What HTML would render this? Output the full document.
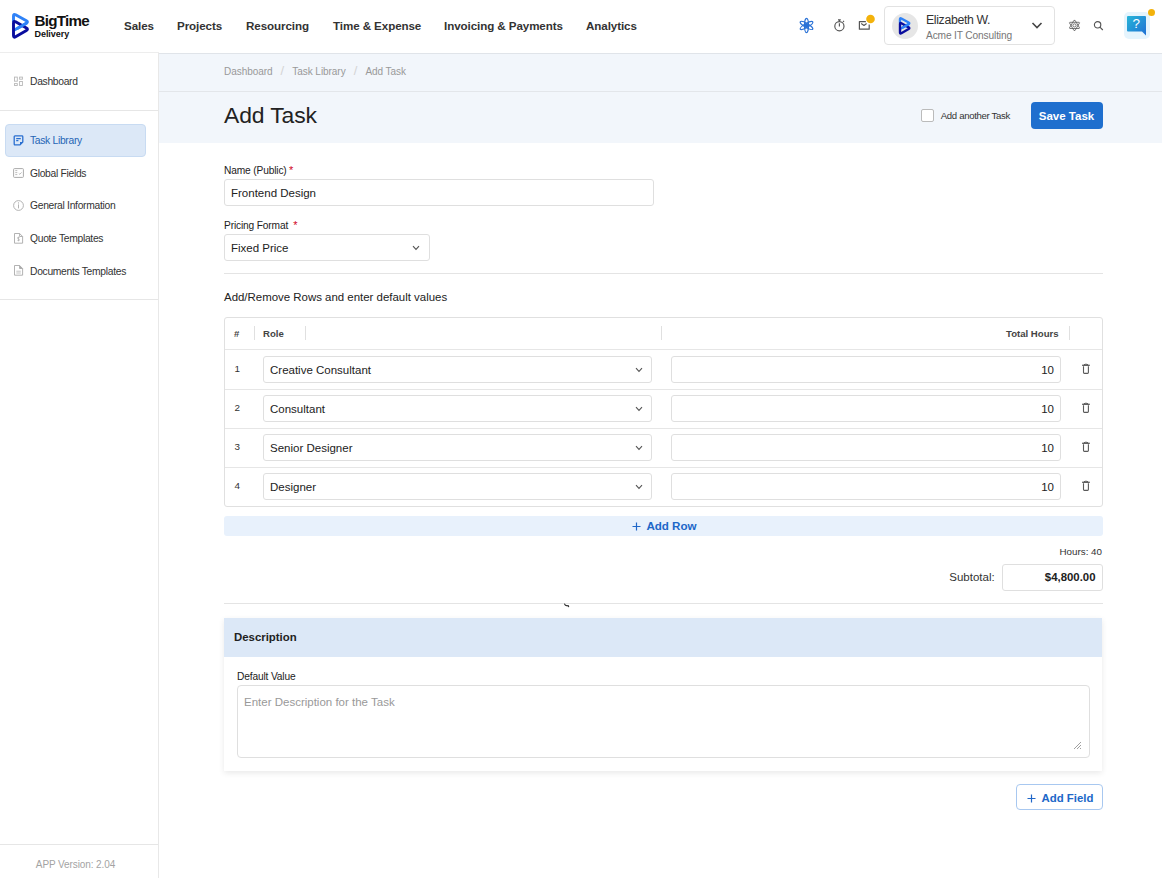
<!DOCTYPE html>
<html><head><meta charset="utf-8">
<style>
*{box-sizing:border-box;margin:0;padding:0}
html,body{width:1162px;height:878px;overflow:hidden;background:#fff;font-family:"Liberation Sans",sans-serif;color:#222}
.a{position:absolute;white-space:nowrap}
#hdr{position:absolute;left:0;top:0;width:1162px;height:53px;background:#fff}
.nav{position:absolute;top:19px;font-size:11.6px;font-weight:bold;color:#333;line-height:14px;letter-spacing:-0.08px}
#side{position:absolute;left:0;top:53px;width:159px;height:825px;background:#fff;border-right:1px solid #e8e8e8}
.si{position:absolute;left:30px;font-size:10.3px;color:#333;line-height:12px;white-space:nowrap;letter-spacing:-0.3px}
.hr{position:absolute;height:1px;background:#e6e6e6}
#band{position:absolute;left:159px;top:53px;width:1003px;height:90.4px;background:#f2f6fb}
.lbl{position:absolute;font-size:10.2px;color:#222;line-height:12px;white-space:nowrap;letter-spacing:-0.15px}
.inp{position:absolute;border:1px solid #dfdfdf;border-radius:3px;background:#fff}
.txt{position:absolute;font-size:11.5px;color:#222;line-height:14px;white-space:nowrap}
.chev{position:absolute}
</style></head><body>
<div id="hdr"></div>
<!-- logo -->
<svg class="a" style="left:10px;top:11px" width="22" height="30" viewBox="10 11 22 30">
  <path d="M13.50 21.00 L13.50 16.00 Q13.50 13.60 15.59 14.77 L26.41 20.83 Q28.50 22.00 26.41 23.19 L14.80 29.80" fill="none" stroke="#2f82f7" stroke-width="2.9" stroke-linejoin="round" stroke-linecap="round"/>
  <path d="M15.58 21.79 L26.42 28.01 Q28.50 29.20 26.43 30.41 L15.57 36.79 Q13.50 38.00 13.50 35.60 L13.50 23.00 Q13.50 20.60 15.58 21.79 Z" fill="none" stroke="#0a0d9e" stroke-width="2.9" stroke-linejoin="round"/>
  <path d="M26.4 23.2 L17.8 28.2" fill="none" stroke="#2f82f7" stroke-width="2.9" stroke-linecap="round"/>
</svg>
<div class="a" style="left:34.5px;top:13px;font-size:15.2px;font-weight:bold;color:#111;letter-spacing:-0.75px;line-height:16px">BigTime</div>
<div class="a" style="left:34.5px;top:29px;font-size:9px;font-weight:bold;color:#111;line-height:10px;letter-spacing:-0.05px">Delivery</div>
<div class="nav" style="left:124px">Sales</div>
<div class="nav" style="left:177px">Projects</div>
<div class="nav" style="left:246px">Resourcing</div>
<div class="nav" style="left:333px">Time &amp; Expense</div>
<div class="nav" style="left:444px">Invoicing &amp; Payments</div>
<div class="nav" style="left:586px">Analytics</div>

<!-- header right -->
<svg class="a" style="left:798px;top:17px" width="17" height="17" viewBox="0 0 17 17">
  <g fill="none" stroke="#2a72d6" stroke-width="1.2">
    <ellipse cx="8.5" cy="8.5" rx="2" ry="7.2"/>
    <ellipse cx="8.5" cy="8.5" rx="2" ry="7.2" transform="rotate(60 8.5 8.5)"/>
    <ellipse cx="8.5" cy="8.5" rx="2" ry="7.2" transform="rotate(-60 8.5 8.5)"/>
  </g>
  <circle cx="8.5" cy="8.5" r="2" fill="#2a72d6"/>
</svg>
<svg class="a" style="left:832px;top:18px" width="14" height="15" viewBox="0 0 14 15">
  <g fill="none" stroke="#555" stroke-width="1.15">
    <circle cx="7.4" cy="8.2" r="4.6"/>
    <path d="M7.4 5.2 V8.4 M6 1.8 H8.8 M7.4 1.8 V3.6 M11 3.8 L12 2.8"/>
  </g>
</svg>
<svg class="a" style="left:855px;top:12px" width="22" height="20" viewBox="855 12 22 20">
  <g fill="none" stroke="#555" stroke-width="1.2" stroke-linejoin="round">
    <path d="M866 21.6 H859.4 V29.2 H869.2 V24.6"/>
    <path d="M861.2 23.6 L864 25.4 L866.6 23.6"/>
  </g>
  <circle cx="870.5" cy="19" r="5.3" fill="#fff"/>
  <circle cx="870.5" cy="19" r="4.3" fill="#f3b20b"/>
</svg>
<div class="a" style="left:884px;top:6px;width:171px;height:39px;border:1px solid #e2e2e2;border-radius:4px;background:#fff"></div>
<div class="a" style="left:892px;top:13px;width:26px;height:26px;border-radius:50%;background:#e6e6e6"></div>
<svg class="a" style="left:897px;top:16px" width="16" height="20" viewBox="10 11 22 30">
  <path d="M13.50 21.00 L13.50 16.00 Q13.50 13.60 15.59 14.77 L26.41 20.83 Q28.50 22.00 26.41 23.19 L14.80 29.80" fill="none" stroke="#2f82f7" stroke-width="3.6" stroke-linejoin="round" stroke-linecap="round"/>
  <path d="M15.58 21.79 L26.42 28.01 Q28.50 29.20 26.43 30.41 L15.57 36.79 Q13.50 38.00 13.50 35.60 L13.50 23.00 Q13.50 20.60 15.58 21.79 Z" fill="none" stroke="#0a0d9e" stroke-width="3.6" stroke-linejoin="round"/>
  <path d="M26.4 23.2 L17.8 28.2" fill="none" stroke="#2f82f7" stroke-width="3.6" stroke-linecap="round"/>
</svg>
<div class="a" style="left:926px;top:13px;font-size:12.3px;color:#333;line-height:14px;letter-spacing:-0.35px">Elizabeth W.</div>
<div class="a" style="left:926px;top:30px;font-size:10.2px;color:#777;line-height:12px;letter-spacing:-0.15px">Acme IT Consulting</div>
<svg class="a" style="left:1031px;top:21px" width="12" height="9" viewBox="0 0 12 9">
  <path d="M1.5 2 L6 6.5 L10.5 2" fill="none" stroke="#444" stroke-width="1.6"/>
</svg>
<svg class="a" style="left:1066px;top:17px" width="17" height="17" viewBox="1066 17 17 17"><g fill="none" stroke="#555" stroke-width="0.8" stroke-linejoin="round"><path d="M1073.9 20.4 H1075.1 L1079.6 28.0 L1079.2 28.5 H1069.8 L1069.4 28.0 Z"/><path d="M1073.9 30.4 H1075.1 L1079.6 22.8 L1079.2 22.3 H1069.8 L1069.4 22.8 Z"/><circle cx="1074.5" cy="25.4" r="1.6"/></g></svg>
<svg class="a" style="left:1093px;top:19.5px" width="12" height="12" viewBox="0 0 12 12">
  <g fill="none" stroke="#555" stroke-width="1.15">
    <circle cx="4.6" cy="4.8" r="3.2"/>
    <path d="M6.9 7.1 L9.8 10"/>
  </g>
</svg>
<div class="a" style="left:1123.5px;top:12px;width:26px;height:26.5px;border-radius:5px;background:#e5f4fd"></div>
<svg class="a" style="left:1126px;top:15px" width="21" height="22" viewBox="0 0 21 22">
  <defs><linearGradient id="hg" x1="0" y1="0" x2="1" y2="1"><stop offset="0" stop-color="#27b5d8"/><stop offset="1" stop-color="#1f6fd4"/></linearGradient></defs>
  <path d="M1 2 Q1 1 2 1 H19 Q20 1 20 2 V20.5 L16 16.5 H2 Q1 16.5 1 15.5 Z" fill="url(#hg)"/>
  <text x="10.3" y="12.9" font-family="Liberation Sans" font-size="13.5" fill="#fff" text-anchor="middle">?</text>
</svg>
<div class="a" style="left:1147.7px;top:8.7px;width:7.2px;height:7.2px;border-radius:50%;background:#f3b20b"></div>

<!-- sidebar -->
<div id="side"></div>
<div class="si" style="top:76px">Dashboard</div>
<div class="hr" style="left:0;top:110px;width:158px"></div>
<div class="a" style="left:5px;top:124px;width:141px;height:33px;background:#dce8f7;border:1px solid #c8dbf2;border-radius:4px"></div>
<div class="si" style="top:135px;color:#2565b5">Task Library</div>
<div class="si" style="top:167.5px">Global Fields</div>
<div class="si" style="top:200px">General Information</div>
<div class="si" style="top:233px">Quote Templates</div>
<div class="si" style="top:265.5px">Documents Templates</div>
<div class="hr" style="left:0;top:299px;width:158px"></div>
<div class="hr" style="left:0;top:844px;width:158px"></div>
<div class="a" style="left:0.5px;top:859px;width:150px;text-align:center;font-size:10px;color:#a3a3a3;letter-spacing:-0.1px">APP Version: 2.04</div>

<svg class="a" style="left:13px;top:76px" width="11" height="11" viewBox="13 76 11 11"><g fill="none" stroke="#b8b8b8" stroke-width="0.9"><rect x="14.5" y="77.1" width="2.8" height="4.1"/><rect x="19.6" y="77.1" width="2.8" height="2.1"/><rect x="14.5" y="83.6" width="2.8" height="1.9"/><rect x="19.6" y="81.5" width="2.8" height="4.0"/></g></svg>
<svg class="a" style="left:13px;top:134.5px" width="11" height="11" viewBox="0 0 11 11"><g fill="none" stroke="#2a6fd0" stroke-width="1.3" stroke-linejoin="round"><path d="M1.2 1.7 Q1.2 0.9 2 0.9 H9 Q9.8 0.9 9.8 1.7 V7 L7 9.9 H2 Q1.2 9.9 1.2 9.1 Z"/><path d="M3.2 3.6 H7.8 M3.2 5.6 H5.4"/></g><path d="M9.8 7 L7 7 L7 9.9 Z" fill="#2a6fd0"/></svg>
<svg class="a" style="left:13px;top:168px" width="11" height="10" viewBox="0 0 11 10"><g fill="none" stroke="#aaa" stroke-width="1"><rect x="0.6" y="0.6" width="9.8" height="8.8" rx="0.8"/><path d="M2.3 2.6 H4.3 M2.3 4.6 H4.3 M2.3 6.6 H4.3 M5.8 5.4 L6.8 6.3 L8.6 4.4" stroke-width="0.8"/></g></svg>
<svg class="a" style="left:13px;top:200px" width="11" height="11" viewBox="0 0 11 11"><g fill="none" stroke="#aaa" stroke-width="0.9"><circle cx="5.5" cy="5.5" r="4.9"/><path d="M5.5 4.4 V8.4"/></g><circle cx="5.5" cy="2.9" r="0.6" fill="#aaa"/></svg>
<svg class="a" style="left:14px;top:232.5px" width="10" height="11" viewBox="0 0 10 11"><g fill="none" stroke="#aaa" stroke-width="0.9"><path d="M0.5 0.5 H5.6 L8.6 3.5 V10.2 H0.5 Z M5.6 0.5 V3.5 H8.6"/><path d="M5.6 4.6 Q4.6 4 3.6 4.6 Q3.2 5.6 4.6 6 Q5.8 6.4 5.3 7.4 Q4.4 7.9 3.4 7.3 M4.5 3.8 V8.2" stroke-width="0.7"/></g></svg>
<svg class="a" style="left:14px;top:265px" width="10" height="11" viewBox="0 0 10 11"><g fill="none" stroke="#aaa" stroke-width="0.9"><path d="M0.5 0.5 H5.6 L8.6 3.5 V10.2 H0.5 Z"/><path d="M5.6 0.5 V3.5 H8.6" /><path d="M2.3 6.2 H6.8 M2.3 8 H6.8" stroke-width="0.7"/></g><path d="M5.6 0.5 L8.6 3.5 H5.6 Z" fill="#aaa"/></svg>

<!-- band -->
<div id="band"></div>
<div class="hr" style="left:0;top:52px;width:159px;background:#ededed"></div>
<div class="hr" style="left:159px;top:53px;width:1003px;background:#e0e4e9"></div>
<div class="hr" style="left:159px;top:91px;width:1003px;background:#e3e6ea"></div>
<div class="a" style="left:224px;top:65px;font-size:10px;color:#999;line-height:12px;letter-spacing:-0.05px">Dashboard<span style="display:inline-block;width:19.8px;text-align:center;color:#d4d4d4;font-size:13px;line-height:12px">/</span>Task Library<span style="display:inline-block;width:19.8px;text-align:center;color:#d4d4d4;font-size:13px;line-height:12px">/</span>Add Task</div>
<div class="a" style="left:224px;top:102px;font-size:22.9px;color:#222;line-height:26px;letter-spacing:-0.1px">Add Task</div>

<!-- title bar right -->
<div class="a" style="left:920.5px;top:108.5px;width:13.5px;height:13.5px;border:1px solid #bbb;border-radius:2px;background:#fff"></div>
<div class="a" style="left:940.7px;top:109.5px;font-size:9.6px;color:#333;line-height:11px;letter-spacing:-0.32px">Add another Task</div>
<div class="a" style="left:1030.5px;top:102px;width:72px;height:26.5px;border-radius:4px;background:#1f6fce;color:#fff;font-size:11.5px;font-weight:bold;line-height:28px;text-align:center">Save Task</div>

<!-- form -->
<div class="lbl" style="left:224px;top:164px">Name (Public)<span style="color:#d0021b;margin-left:2.5px;font-size:11px">*</span></div>
<div class="inp" style="left:224px;top:179px;width:430px;height:27px"></div>
<div class="txt" style="left:231px;top:186px">Frontend Design</div>
<div class="lbl" style="left:224px;top:219px">Pricing Format<span style="color:#d0021b;margin-left:5px;font-size:11px">*</span></div>
<div class="inp" style="left:224px;top:234px;width:206px;height:27px"></div>
<div class="txt" style="left:231px;top:241px">Fixed Price</div>
<svg class="chev" style="left:412px;top:245px" width="8" height="6" viewBox="0 0 8 6"><path d="M1 1.2 L4 4.4 L7 1.2" fill="none" stroke="#555" stroke-width="1.15"/></svg>
<div class="hr" style="left:224px;top:273px;width:879px;background:#e4e4e4"></div>

<div class="a" style="left:224px;top:291px;font-size:11.45px;color:#222;line-height:13px;letter-spacing:0px">Add/Remove Rows and enter default values</div>

<!-- table -->
<div class="a" style="left:224px;top:317px;width:879px;height:190px;border:1px solid #e0e0e0;border-radius:3px;background:#fff"></div>
<div class="a" style="left:234px;top:328px;font-size:9.6px;font-weight:bold;color:#444;line-height:11px">#</div>
<div class="a" style="left:263px;top:328px;font-size:9.6px;font-weight:bold;color:#444;line-height:11px">Role</div>
<div class="a" style="left:1006px;top:328px;font-size:9.6px;font-weight:bold;color:#444;line-height:11px">Total Hours</div>
<div class="a" style="left:254px;top:326px;width:1px;height:14px;background:#e0e0e0"></div>
<div class="a" style="left:305px;top:326px;width:1px;height:14px;background:#e0e0e0"></div>
<div class="a" style="left:661px;top:326px;width:1px;height:14px;background:#e0e0e0"></div>
<div class="a" style="left:1069px;top:326px;width:1px;height:14px;background:#e0e0e0"></div>
<div class="hr" style="left:225px;top:349px;width:877px;background:#e6e6e6"></div>
<div class="a" style="left:234.5px;top:362.7px;font-size:9.9px;color:#333;line-height:11px">1</div>
<div class="inp" style="left:263px;top:356px;width:389px;height:27px"></div>
<div class="txt" style="left:270px;top:362.5px">Creative Consultant</div>
<svg class="chev" style="left:635px;top:367px" width="8" height="6" viewBox="0 0 8 6"><path d="M1 1.2 L4 4.4 L7 1.2" fill="none" stroke="#555" stroke-width="1.1"/></svg>
<div class="inp" style="left:671px;top:356px;width:390px;height:27px"></div>
<div class="txt" style="left:1000px;top:362.5px;width:54px;text-align:right">10</div>
<svg class="a" style="left:1081px;top:363px" width="10" height="12" viewBox="0 0 10 12"><g fill="none" stroke="#5a5a5a" stroke-linejoin="round"><path d="M1.1 2.3 H8.8" stroke-width="1.3"/><path d="M2.9 1.7 Q4.95 0.6 7 1.7" stroke-width="1"/><path d="M2.5 3.2 V9.6 Q2.5 10.4 3.3 10.4 H6.6 Q7.4 10.4 7.4 9.6 V3.2" stroke-width="1.1"/></g></svg>
<div class="hr" style="left:225px;top:389px;width:877px;background:#e6e6e6"></div>
<div class="a" style="left:234.5px;top:401.7px;font-size:9.9px;color:#333;line-height:11px">2</div>
<div class="inp" style="left:263px;top:395px;width:389px;height:27px"></div>
<div class="txt" style="left:270px;top:401.5px">Consultant</div>
<svg class="chev" style="left:635px;top:406px" width="8" height="6" viewBox="0 0 8 6"><path d="M1 1.2 L4 4.4 L7 1.2" fill="none" stroke="#555" stroke-width="1.1"/></svg>
<div class="inp" style="left:671px;top:395px;width:390px;height:27px"></div>
<div class="txt" style="left:1000px;top:401.5px;width:54px;text-align:right">10</div>
<svg class="a" style="left:1081px;top:402px" width="10" height="12" viewBox="0 0 10 12"><g fill="none" stroke="#5a5a5a" stroke-linejoin="round"><path d="M1.1 2.3 H8.8" stroke-width="1.3"/><path d="M2.9 1.7 Q4.95 0.6 7 1.7" stroke-width="1"/><path d="M2.5 3.2 V9.6 Q2.5 10.4 3.3 10.4 H6.6 Q7.4 10.4 7.4 9.6 V3.2" stroke-width="1.1"/></g></svg>
<div class="hr" style="left:225px;top:428px;width:877px;background:#e6e6e6"></div>
<div class="a" style="left:234.5px;top:440.7px;font-size:9.9px;color:#333;line-height:11px">3</div>
<div class="inp" style="left:263px;top:434px;width:389px;height:27px"></div>
<div class="txt" style="left:270px;top:440.5px">Senior Designer</div>
<svg class="chev" style="left:635px;top:445px" width="8" height="6" viewBox="0 0 8 6"><path d="M1 1.2 L4 4.4 L7 1.2" fill="none" stroke="#555" stroke-width="1.1"/></svg>
<div class="inp" style="left:671px;top:434px;width:390px;height:27px"></div>
<div class="txt" style="left:1000px;top:440.5px;width:54px;text-align:right">10</div>
<svg class="a" style="left:1081px;top:441px" width="10" height="12" viewBox="0 0 10 12"><g fill="none" stroke="#5a5a5a" stroke-linejoin="round"><path d="M1.1 2.3 H8.8" stroke-width="1.3"/><path d="M2.9 1.7 Q4.95 0.6 7 1.7" stroke-width="1"/><path d="M2.5 3.2 V9.6 Q2.5 10.4 3.3 10.4 H6.6 Q7.4 10.4 7.4 9.6 V3.2" stroke-width="1.1"/></g></svg>
<div class="hr" style="left:225px;top:467px;width:877px;background:#e6e6e6"></div>
<div class="a" style="left:234.5px;top:479.7px;font-size:9.9px;color:#333;line-height:11px">4</div>
<div class="inp" style="left:263px;top:473px;width:389px;height:27px"></div>
<div class="txt" style="left:270px;top:479.5px">Designer</div>
<svg class="chev" style="left:635px;top:484px" width="8" height="6" viewBox="0 0 8 6"><path d="M1 1.2 L4 4.4 L7 1.2" fill="none" stroke="#555" stroke-width="1.1"/></svg>
<div class="inp" style="left:671px;top:473px;width:390px;height:27px"></div>
<div class="txt" style="left:1000px;top:479.5px;width:54px;text-align:right">10</div>
<svg class="a" style="left:1081px;top:480px" width="10" height="12" viewBox="0 0 10 12"><g fill="none" stroke="#5a5a5a" stroke-linejoin="round"><path d="M1.1 2.3 H8.8" stroke-width="1.3"/><path d="M2.9 1.7 Q4.95 0.6 7 1.7" stroke-width="1"/><path d="M2.5 3.2 V9.6 Q2.5 10.4 3.3 10.4 H6.6 Q7.4 10.4 7.4 9.6 V3.2" stroke-width="1.1"/></g></svg>

<div class="a" style="left:224px;top:516px;width:879px;height:20px;border-radius:3px;background:#e8f1fc"></div>
<svg class="a" style="left:632px;top:521.5px" width="9" height="9" viewBox="0 0 9 9"><path d="M4.5 0.5 V8.5 M0.5 4.5 H8.5" stroke="#2067c8" stroke-width="1.2"/></svg>
<div class="a" style="left:646.5px;top:518.5px;font-size:11.6px;font-weight:bold;color:#2067c8;line-height:14px;letter-spacing:-0.05px">Add Row</div>
<div class="a" style="left:1002px;top:546px;width:100px;text-align:right;font-size:9.8px;color:#333;line-height:11px">Hours: 40</div>
<div class="a" style="left:894.7px;top:570px;width:100px;text-align:right;font-size:11.5px;color:#333;line-height:14px">Subtotal:</div>
<div class="inp" style="left:1002px;top:564px;width:101px;height:27px"></div>
<div class="a" style="left:1002px;top:570px;width:93.5px;text-align:right;font-size:11.4px;font-weight:bold;color:#222;line-height:14px">$4,800.00</div>
<div class="hr" style="left:224px;top:602.6px;width:879px;background:#e4e4e4"></div>
<svg class="a" style="left:562px;top:601px" width="10" height="8" viewBox="562 601 10 8"><path d="M564.6 604.1 Q565.2 605.6 566.6 605.6 L568.4 605.8 L568.6 606.6" fill="none" stroke="#333" stroke-width="1.2" stroke-linecap="round"/></svg>

<!-- description card -->
<div class="a" style="left:224px;top:618px;width:878px;height:153px;background:#fff;box-shadow:0 2px 6px rgba(0,0,0,0.09)"></div>
<div class="a" style="left:224px;top:618px;width:878px;height:39px;background:#dce8f7"></div>
<div class="a" style="left:234px;top:630px;font-size:11.4px;font-weight:bold;color:#222;line-height:14px">Description</div>
<div class="lbl" style="left:237px;top:671px">Default Value</div>
<div class="inp" style="left:237px;top:685px;width:853px;height:73px;border-radius:4px"></div>
<div class="a" style="left:244px;top:695px;font-size:11.5px;color:#999;line-height:14px">Enter Description for the Task</div>
<svg class="a" style="left:1072px;top:740px" width="10" height="10" viewBox="0 0 10 10"><path d="M2 9 L9 2 M5 9 L9 5 M8 9 L9 8" stroke="#888" stroke-width="0.8"/></svg>

<div class="a" style="left:1016px;top:784px;width:87px;height:26px;border:1px solid #a8c8f0;border-radius:4px;background:#fff"></div>
<svg class="a" style="left:1026.5px;top:793.5px" width="9" height="9" viewBox="0 0 9 9"><path d="M4.5 0.5 V8.5 M0.5 4.5 H8.5" stroke="#2067c8" stroke-width="1.2"/></svg>
<div class="a" style="left:1041.5px;top:790.5px;font-size:11.4px;font-weight:bold;color:#2067c8;line-height:14px">Add Field</div>
</body></html>
